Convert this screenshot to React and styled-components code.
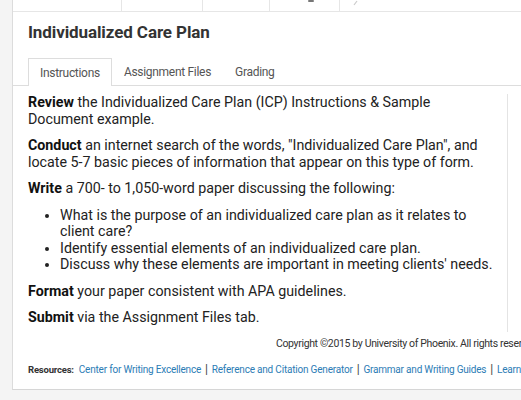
import styled, { createGlobalStyle } from "styled-components";

const GlobalStyle = createGlobalStyle`
    html, body {
        margin:0;
        padding:0;
        overflow:hidden;
        background:#f4f4f4;
        font-family:Roboto, "Liberation Sans", sans-serif;
    }
`;

const topCells = [
    { width: 109, mark: null },
    { width: 81, mark: null },
    { width: 67, mark: null },
    { width: 70, mark: "bar" },
    { width: 200, mark: "slash" },
];

const bullets = [
    "What is the purpose of an individualized care plan as it relates to client care?",
    "Identify essential elements of an individualized care plan.",
    "Discuss why these elements are important in meeting clients' needs.",
];

const resources = [
    "Center for Writing Excellence",
    "Reference and Citation Generator",
    "Grammar and Writing Guides",
    "Learning Team Toolkit",
];

export default function App(){
    return (
        <>
            <GlobalStyle />
            <Page>
                <Card>
                    <TopBar>
                        {topCells.map((cell, i) => (
                            <TopCell key={i} style={{ width: cell.width }}>
                                {cell.mark === "bar" && (
                                    <svg width="10" height="4" viewBox="0 0 10 4">
                                        <rect x="2" y="0" width="6" height="2" rx="1" fill="#777" />
                                    </svg>
                                )}
                                {cell.mark === "slash" && (
                                    <svg width="10" height="6" viewBox="0 0 10 6">
                                        <path d="M2 5 L5 1" stroke="#ccc" strokeWidth="1.2" />
                                    </svg>
                                )}
                            </TopCell>
                        ))}
                    </TopBar>
                    <Title>Individualized Care Plan</Title>
                    <Tabs>
                        <Tab active={true}>Instructions</Tab>
                        <Tab>Assignment Files</Tab>
                        <Tab>Grading</Tab>
                    </Tabs>
                    <Panel>
                        <Paragraph><b>Review</b> the Individualized Care Plan (ICP) Instructions &amp; Sample Document example.</Paragraph>
                        <Paragraph><b>Conduct</b> an internet search of the words, "Individualized Care Plan", and locate 5-7 basic pieces of information that appear on this type of form.</Paragraph>
                        <Paragraph><b>Write</b> a 700- to 1,050-word paper discussing the following:</Paragraph>
                        <List>
                            {bullets.map(item => <li key={item}>{item}</li>)}
                        </List>
                        <Paragraph><b>Format</b> your paper consistent with APA guidelines.</Paragraph>
                        <Paragraph><b>Submit</b> via the Assignment Files tab.</Paragraph>
                    </Panel>
                    <Copyright>Copyright ©2015 by University of Phoenix. All rights reserved.</Copyright>
                    <Resources>
                        <Label>Resources:</Label>
                        {resources.map((item, i) => (
                            <span key={item}>
                                {i > 0 && <Sep>|</Sep>}
                                <Link href="#">{item}</Link>
                            </span>
                        ))}
                    </Resources>
                </Card>
            </Page>
        </>
    );
}

const Page = styled.main`
    width:100%;
    height:400px;
    padding-left:12px;
    box-sizing:border-box;
`;

const Card = styled.section`
    width:600px;
    background:#fff;
    border-left:1px solid #dcdcdc;
    border-bottom:1px solid #d6d6d6;
    box-sizing:border-box;
`;

const TopBar = styled.div`
    height:11px;
    display:flex;
    border-bottom:1px solid #e6e6e6;
`;

const TopCell = styled.div`
    height:100%;
    flex-shrink:0;
    border-right:1px solid #e6e6e6;
    display:flex;
    justify-content:center;
    align-items:flex-start;
    padding-left:12px;
    box-sizing:border-box;

    &:last-child{
        justify-content:flex-start;
        border-right:none;
    }

    &:first-child{
        padding-left:0;
    }
`;

const Title = styled.h1`
    margin:0;
    padding:10px 15px 0;
    height:46px;
    box-sizing:border-box;
    font-size:17px;
    letter-spacing:-0.1px;
    font-weight:700;
    color:#333;
`;

const Tabs = styled.nav`
    display:flex;
    align-items:flex-end;
    height:27px;
    padding-left:15px;
    border-bottom:1px solid #ddd;
`;

const Tab = styled.div`
    box-sizing:border-box;
    display:flex;
    align-items:center;
    padding:0 11px;
    font-size:12px;
    letter-spacing:-0.3px;
    color:#555;
    background:#fff;
    border:1px solid ${props => props.active ? "#ddd" : "transparent"};
    border-bottom:none;
    margin-bottom:${props => props.active ? "-1px" : "0"};
    height:${props => props.active ? "28px" : "27px"};
`;

const Panel = styled.div`
    width:495px;
    box-sizing:border-box;
    margin-top:8px;
    padding:0 12px 6px 15px;
    border-right:1px solid #e4e4e4;
    color:#222;
    font-size:14.25px;
    line-height:16.5px;
`;

const Paragraph = styled.p`
    margin:0 0 10px;

    &:last-child{
        margin-bottom:0;
    }

    b{
        font-weight:700;
        color:#111;
    }
`;

const List = styled.ul`
    margin:0 0 10px;
    padding-left:32px;
`;

const Copyright = styled.div`
    padding:0 0 0 263px;
    margin-top:5px;
    font-size:10.5px;
    letter-spacing:-0.35px;
    line-height:14px;
    color:#333;
    white-space:nowrap;
`;

const Resources = styled.div`
    padding:11px 0 12px 15px;
    font-size:10px;
    letter-spacing:-0.2px;
    line-height:14px;
    white-space:nowrap;
    color:#333;
`;

const Label = styled.span`
    font-size:9.5px;
    font-weight:700;
    margin-right:5px;
`;

const Sep = styled.span`
    margin:0 4px;
    font-size:12px;
    color:#444;
`;

const Link = styled.a`
    color:#2b7cb5;
    text-decoration:none;
`;
